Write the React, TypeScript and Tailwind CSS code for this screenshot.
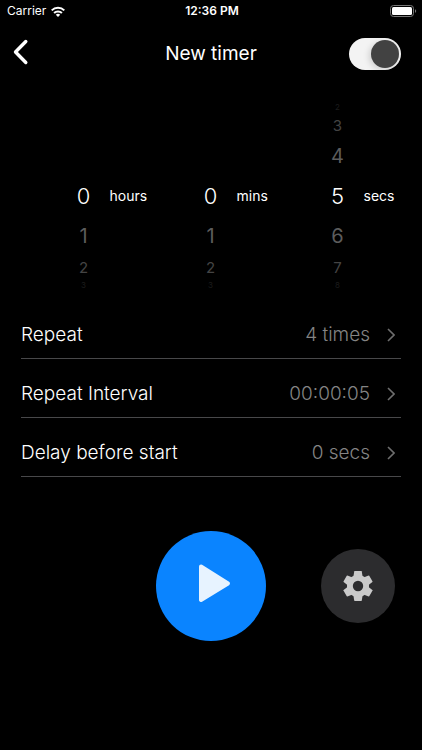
import { useState } from "react";

type Column = { unit: string; above: string[]; value: string; below: string[] };

const columns: Column[] = [
  { unit: "hours", above: ["", "", ""], value: "0", below: ["1", "2", "3"] },
  { unit: "mins", above: ["", "", ""], value: "0", below: ["1", "2", "3"] },
  { unit: "secs", above: ["2", "3", "4"], value: "5", below: ["6", "7", "8"] },
];

const settings = [
  { label: "Repeat", value: "4 times" },
  { label: "Repeat Interval", value: "00:00:05" },
  { label: "Delay before start", value: "0 secs" },
];

const aboveStyles = [
  "h-[10px] text-[8px] text-[#1c1c1c]",
  "h-[26px] text-[15px] text-[#444444]",
  "h-9 text-[20px] text-[#5c5c5c]",
];
const belowStyles = [
  "h-9 text-[20px] text-[#5c5c5c]",
  "h-[26px] text-[15px] text-[#444444]",
  "h-[10px] text-[8px] text-[#1c1c1c]",
];

const teeth = [
  "rotate(0 18 18)",
  "rotate(60 18 18)",
  "rotate(120 18 18)",
  "rotate(180 18 18)",
  "rotate(240 18 18)",
  "rotate(300 18 18)",
];

function StatusBar() {
  return (
    <div className="grid h-[22px] grid-cols-3 items-center pr-[5px] pl-[7px] text-[12px] leading-4">
      <div className="flex items-center gap-[5px]">
        <span>Carrier</span>
        <svg viewBox="0 0 14 11" className="h-[11px] w-[14px]" fill="none" stroke="white" strokeWidth="2">
          <path d="M0.7 4.400a8.900 8.900 0 0 1 12.600 0" />
          <path d="M3.100 7a5.500 5.500 0 0 1 7.800 0" />
          <path d="M7 11 4.800 8.800a3.100 3.100 0 0 1 4.400 0z" fill="white" stroke="none" />
        </svg>
      </div>
      <div className="text-center font-semibold">12:36 PM</div>
      <svg viewBox="0 0 27 12" className="h-3 w-[27px] justify-self-end" fill="none">
        <rect x="0.5" y="0.5" width="23" height="11" rx="3" stroke="#777777" />
        <rect x="2" y="2" width="20" height="8" rx="1.500" fill="white" />
        <path d="M25 4.200v3.600c1.600-.5 1.600-3.100 0-3.600z" fill="#777777" />
      </svg>
    </div>
  );
}

function Wheel({ unit, above, value, below }: Column) {
  return (
    <div role="group" aria-label={unit} className="flex flex-col">
      {above.map((n, i) => (
        <div key={i} className={`flex items-center justify-center leading-none ${aboveStyles[i]}`}>{n}</div>
      ))}
      <div className="grid h-11 grid-cols-[1fr_24px_1fr] items-center">
        <span className="col-start-2 text-center text-[22px] leading-none font-light">{value}</span>
        <span className="w-0 pl-[14px] text-[14px] leading-none whitespace-nowrap">{unit}</span>
      </div>
      {below.map((n, i) => (
        <div key={i} className={`flex items-center justify-center leading-none ${belowStyles[i]}`}>{n}</div>
      ))}
    </div>
  );
}

export default function App() {
  const [enabled, setEnabled] = useState(true);

  return (
    <main className="min-h-screen bg-black font-['Inter','Liberation_Sans',sans-serif] text-white">
      <StatusBar />
      <header className="grid h-16 grid-cols-[1fr_auto_1fr] items-center px-[21px]">
        <button aria-label="Back" className="-ml-2 flex h-9 w-7 items-center justify-start pb-1">
          <svg viewBox="0 0 16 26" className="h-[26px] w-4" fill="none" stroke="white" strokeWidth="3.400" strokeLinecap="round" strokeLinejoin="round">
            <path d="M12.800 2.500 2.500 13l10.300 10.500" />
          </svg>
        </button>
        <h1 className="text-[19px] leading-7">New timer</h1>
        <label className="relative flex h-8 w-[52px] cursor-pointer items-center justify-self-end">
          <input
            type="checkbox"
            role="switch"
            aria-label="Timer enabled"
            checked={enabled}
            onChange={(e) => setEnabled(e.target.checked)}
            className="peer h-8 w-[52px] appearance-none rounded-full bg-[#f3f3f3]"
          />
          <span className="pointer-events-none absolute left-[2px] size-7 rounded-full bg-[#424242] shadow-[-2px_2px_6px_rgba(0,0,0,0.15)] peer-checked:left-[22px]" />
        </label>
      </header>

      <section aria-label="Duration" className="mt-4 grid grid-cols-3 pr-[21px] pl-5">
        {columns.map((c) => (
          <Wheel key={c.unit} {...c} />
        ))}
      </section>

      <section aria-label="Options" className="mt-[10px] px-[21px]">
        {settings.map((s) => (
          <button
            key={s.label}
            className="flex h-[59px] w-full items-center border-b border-[#48484a] pt-3 pr-[6px] text-left text-[19px] leading-7 font-light"
          >
            <span className="flex-1">{s.label}</span>
            <span className="text-[#848484]">{s.value}</span>
            <svg viewBox="0 0 8 14" className="ml-[17px] h-[14px] w-2" fill="none" stroke="#6e6e6e" strokeWidth="1.600">
              <path d="M1 1l6 6-6 6" />
            </svg>
          </button>
        ))}
      </section>

      <section aria-label="Controls" className="mt-[54px] grid grid-cols-[1fr_auto_1fr] items-center px-[27px]">
        <button aria-label="Start" className="col-start-2 flex size-[110px] items-center justify-center rounded-full bg-[#0a84ff]">
          <svg viewBox="0 0 110 110" className="size-[110px]">
            <path d="M45 35.500 72 52.500 45 69z" fill="#e7f3ff" stroke="#e7f3ff" strokeWidth="4" strokeLinejoin="round" />
          </svg>
        </button>
        <button aria-label="Settings" className="flex size-[74px] items-center justify-center justify-self-end rounded-full bg-[#2c2c2e]">
          <svg viewBox="0 0 36 36" className="size-9" fill="#cacaca">
            <circle cx="18" cy="18" r="11" />
            {teeth.map((rotation) => (
              <path key={rotation} transform={rotation} d="M14.700 3.100h6.600l.5.500.9 6h-9.400l.9-6z" />
            ))}
            <circle cx="18" cy="18" r="5.200" fill="#2c2c2e" />
          </svg>
        </button>
      </section>
    </main>
  );
}
